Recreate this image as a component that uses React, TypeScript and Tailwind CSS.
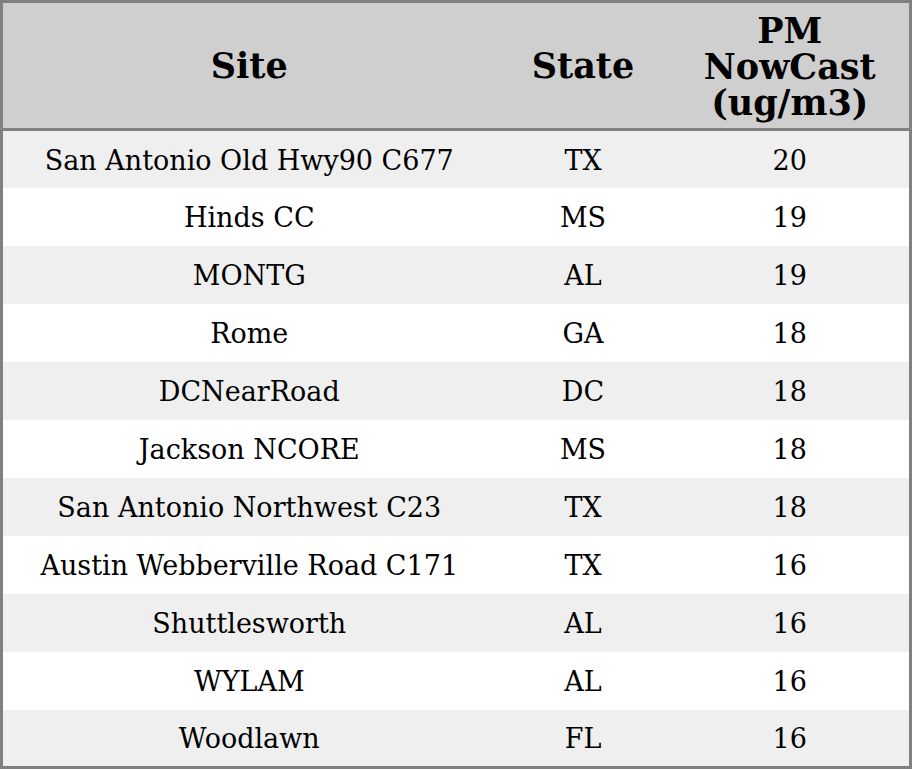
import React from 'react';

interface Reading {
  site: string;
  state: string;
  pm: number;
}

const READINGS: Reading[] = [
  { site: 'San Antonio Old Hwy90 C677', state: 'TX', pm: 20 },
  { site: 'Hinds CC', state: 'MS', pm: 19 },
  { site: 'MONTG', state: 'AL', pm: 19 },
  { site: 'Rome', state: 'GA', pm: 18 },
  { site: 'DCNearRoad', state: 'DC', pm: 18 },
  { site: 'Jackson NCORE', state: 'MS', pm: 18 },
  { site: 'San Antonio Northwest C23', state: 'TX', pm: 18 },
  { site: 'Austin Webberville Road C171', state: 'TX', pm: 16 },
  { site: 'Shuttlesworth', state: 'AL', pm: 16 },
  { site: 'WYLAM', state: 'AL', pm: 16 },
  { site: 'Woodlawn', state: 'FL', pm: 16 },
];

const App: React.FC = () => {
  return (
    <div className="w-[912px] h-[769px] bg-white font-['DejaVu_Serif',serif] text-black">
      <table className="w-full border-collapse border-[3px] border-[#808080]">
        <thead>
          <tr className="h-[128px] bg-[#cfcfcf] border-b-[3px] border-[#808080]">
            <th className="w-[494px] text-center text-[35px] font-bold leading-[36px]">Site</th>
            <th className="w-[175px] text-center text-[35px] font-bold leading-[36px]">State</th>
            <th className="text-center text-[35px] font-bold leading-[36px] pt-[2px]">
              PM
              <br />
              NowCast
              <br />
              (ug/m3)
            </th>
          </tr>
        </thead>
        <tbody>
          {READINGS.map((r, i) => (
            <tr key={r.site} className={i % 2 === 0 ? 'h-[58px] bg-[#efefef]' : 'h-[58px] bg-white'}>
              <td className="text-center text-[27px] leading-[30px] pt-[3px]">{r.site}</td>
              <td className="text-center text-[27px] leading-[30px] pt-[3px]">{r.state}</td>
              <td className="text-center text-[27px] leading-[30px] pt-[3px]">{r.pm}</td>
            </tr>
          ))}
        </tbody>
      </table>
    </div>
  );
};

export default App;
